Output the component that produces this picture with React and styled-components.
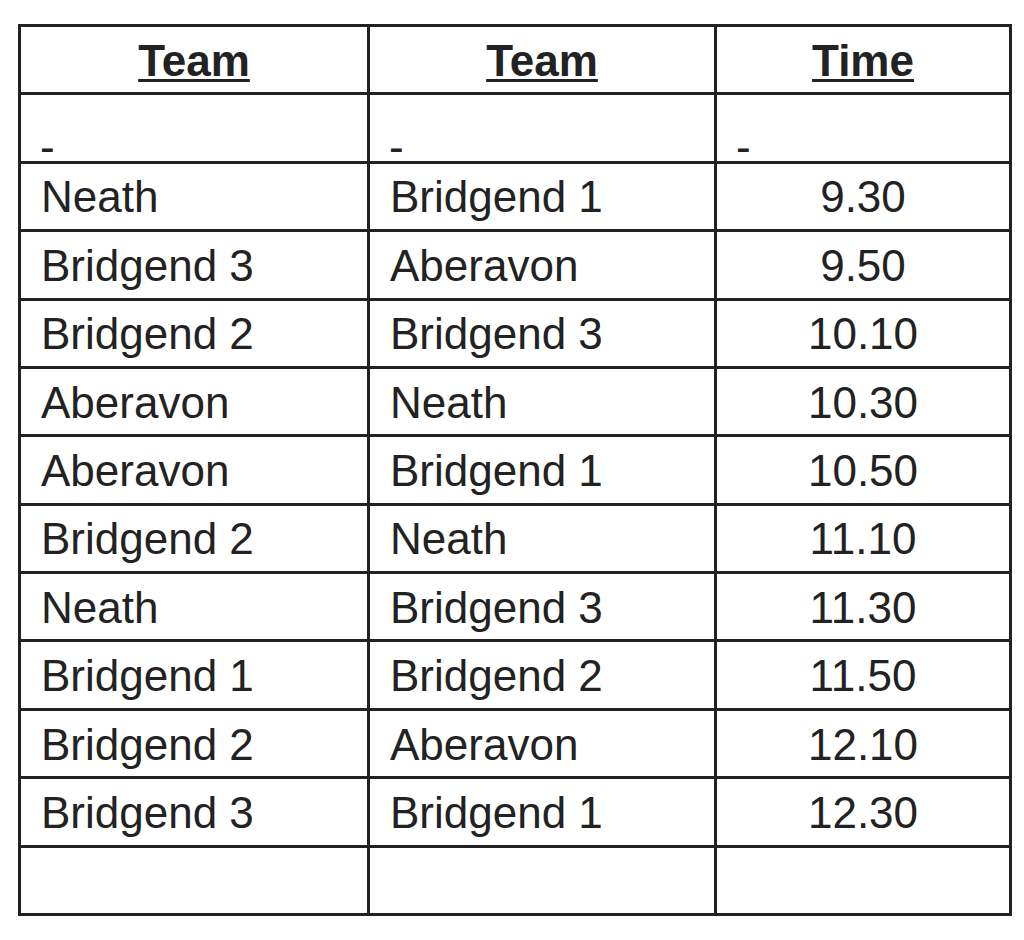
import React from "react";
import styled, { createGlobalStyle } from "styled-components";

const GlobalStyle = createGlobalStyle`
  html, body {
    margin: 0;
    padding: 0;
    background: #ffffff;
  }
  body {
    font-family: "Liberation Sans", Arial, Helvetica, sans-serif;
    color: #222222;
  }
`;

const Page = styled.div`
  width: 1024px;
  height: 940px;
  padding: 24px 0 0 18px;
  box-sizing: border-box;
`;

// the grid gap + dark background draws the 3px rules between cells
const Sheet = styled.div`
  display: grid;
  grid-template-columns: 346px 344px 292px;
  grid-template-rows: repeat(13, 1fr);
  gap: 3px;
  padding: 3px;
  width: 994px;
  height: 892px;
  box-sizing: border-box;
  background: #222222;
`;

const Cell = styled.div`
  background: #ffffff;
  display: flex;
  align-items: ${(p) => (p.$dash ? "flex-end" : "center")};
  justify-content: ${(p) => (p.$center ? "center" : "flex-start")};
  padding: ${(p) => (p.$center ? "2px 0 0" : p.$dash ? "0 0 0 19px" : "2px 0 0 20px")};
  font-size: 44px;
  line-height: ${(p) => (p.$dash ? "28px" : "normal")};
  font-weight: ${(p) => (p.$head ? 700 : 400)};
  color: #222222;
  white-space: nowrap;
`;

const HeadText = styled.span`
  text-decoration: underline;
  text-decoration-thickness: 3px;
  text-underline-offset: 3px;
`;

const fixtures = [
  ["Neath", "Bridgend 1", "9.30"],
  ["Bridgend 3", "Aberavon", "9.50"],
  ["Bridgend 2", "Bridgend 3", "10.10"],
  ["Aberavon", "Neath", "10.30"],
  ["Aberavon", "Bridgend 1", "10.50"],
  ["Bridgend 2", "Neath", "11.10"],
  ["Neath", "Bridgend 3", "11.30"],
  ["Bridgend 1", "Bridgend 2", "11.50"],
  ["Bridgend 2", "Aberavon", "12.10"],
  ["Bridgend 3", "Bridgend 1", "12.30"],
];

export default function App() {
  return (
    <Page>
      <GlobalStyle />
      <Sheet>
        <Cell $head $center>
          <HeadText>Team</HeadText>
        </Cell>
        <Cell $head $center>
          <HeadText>Team</HeadText>
        </Cell>
        <Cell $head $center>
          <HeadText>Time</HeadText>
        </Cell>

        <Cell $dash>-</Cell>
        <Cell $dash>-</Cell>
        <Cell $dash>-</Cell>

        {fixtures.map(([home, away, time], i) => (
          <React.Fragment key={i}>
            <Cell>{home}</Cell>
            <Cell>{away}</Cell>
            <Cell $center>{time}</Cell>
          </React.Fragment>
        ))}

        <Cell />
        <Cell />
        <Cell />
      </Sheet>
    </Page>
  );
}
